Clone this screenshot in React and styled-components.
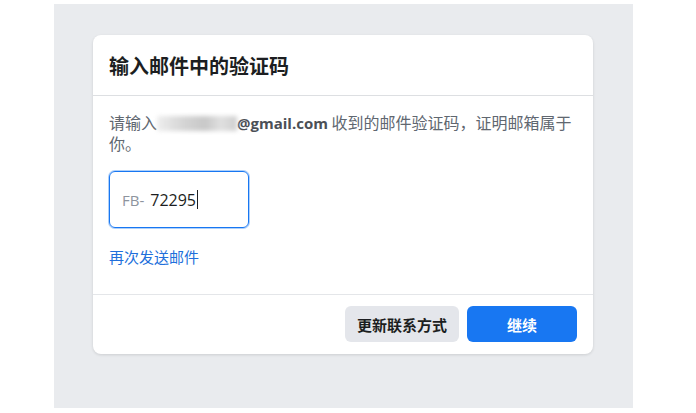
import React from 'react';
import styled, { createGlobalStyle } from 'styled-components';

const GlobalStyle = createGlobalStyle`
  body {
    margin: 0;
    background: #ffffff;
    font-family: "Open Sans", "Noto Sans CJK SC", sans-serif;
  }
`;

const Page = styled.div`
  margin: 4px 0 0 54px;
  width: 579px;
  height: 404px;
  box-sizing: border-box;
  padding: 31px 40px 0 39px;
  background: #e9ebee;
`;

const Card = styled.div`
  width: 500px;
  background: #fff;
  border-radius: 8px;
  box-shadow: 0 1px 3px rgba(0, 0, 0, 0.12);
  overflow: hidden;
`;

const Header = styled.div`
  height: 60px;
  display: flex;
  align-items: center;
  padding: 0 16px;
  border-bottom: 1px solid #dddfe2;
`;

const Title = styled.h2`
  margin: 0;
  font-size: 20px;
  font-weight: 700;
  color: #1c1e21;
  font-family: "Noto Sans CJK SC", sans-serif;
`;

const Body = styled.div`
  padding: 16px 16px 28px;
  border-bottom: 1px solid #e4e6e9;
`;

const Text = styled.p`
  margin: 0;
  font-size: 16px;
  line-height: 20px;
  color: #606770;
  font-family: "Noto Sans CJK SC", sans-serif;
`;

const Blur = styled.span`
  display: inline-block;
  width: 80px;
  height: 15px;
  vertical-align: -2px;
  background: linear-gradient(90deg, rgba(236,236,236,0.9) 0%, #d4d4d4 35%, #c8c8c8 60%, #e0e0e0 80%, #cfcfcf 100%);
  filter: blur(2px);
`;

const Email = styled.b`
  font-family: "Open Sans", sans-serif;
  font-size: 15px;
  font-weight: 700;
  color: #4b4f56;
`;

const CodeBox = styled.div`
  margin-top: 18px;
  width: 140px;
  height: 57px;
  box-sizing: border-box;
  border: 1px solid #1877f2;
  box-shadow: 0 0 0 1px rgba(24, 119, 242, 0.35);
  border-radius: 6px;
  display: flex;
  align-items: center;
  padding-left: 12px;
  font-family: "Open Sans", sans-serif;
  font-size: 16px;
`;

const Prefix = styled.span`
  color: #8d949e;
  font-size: 15px;
  margin-right: 6px;
`;

const Value = styled.span`
  color: #1c1e21;
`;

const Caret = styled.span`
  display: inline-block;
  width: 1px;
  height: 19px;
  margin-left: 1px;
  background: #1c1e21;
`;

const Link = styled.a`
  display: block;
  margin-top: 20px;
  font-size: 15px;
  line-height: 18px;
  color: #216fdb;
  text-decoration: none;
  font-family: "Noto Sans CJK SC", sans-serif;
`;

const Footer = styled.div`
  display: flex;
  justify-content: flex-end;
  gap: 8px;
  padding: 11px 16px 12px;
`;

const Button = styled.button`
  height: 36px;
  width: ${p => p.w}px;
  border: none;
  border-radius: 6px;
  font-size: 15px;
  font-weight: 700;
  font-family: "Noto Sans CJK SC", sans-serif;
  background: ${p => (p.primary ? '#1877f2' : '#e4e6eb')};
  color: ${p => (p.primary ? '#fff' : '#1c1e21')};
  cursor: pointer;
`;

function App() {
  return (
    <>
      <GlobalStyle />
      <Page>
        <Card>
          <Header>
            <Title>输入邮件中的验证码</Title>
          </Header>
          <Body>
            <Text>
              请输入<Blur /><Email>@gmail.com</Email> 收到的邮件验证码，证明邮箱属于你。
            </Text>
            <CodeBox>
              <Prefix>FB-</Prefix>
              <Value>72295</Value>
              <Caret />
            </CodeBox>
            <Link href="#">再次发送邮件</Link>
          </Body>
          <Footer>
            <Button w={114}>更新联系方式</Button>
            <Button primary w={110}>继续</Button>
          </Footer>
        </Card>
      </Page>
    </>
  );
}

export default App;
